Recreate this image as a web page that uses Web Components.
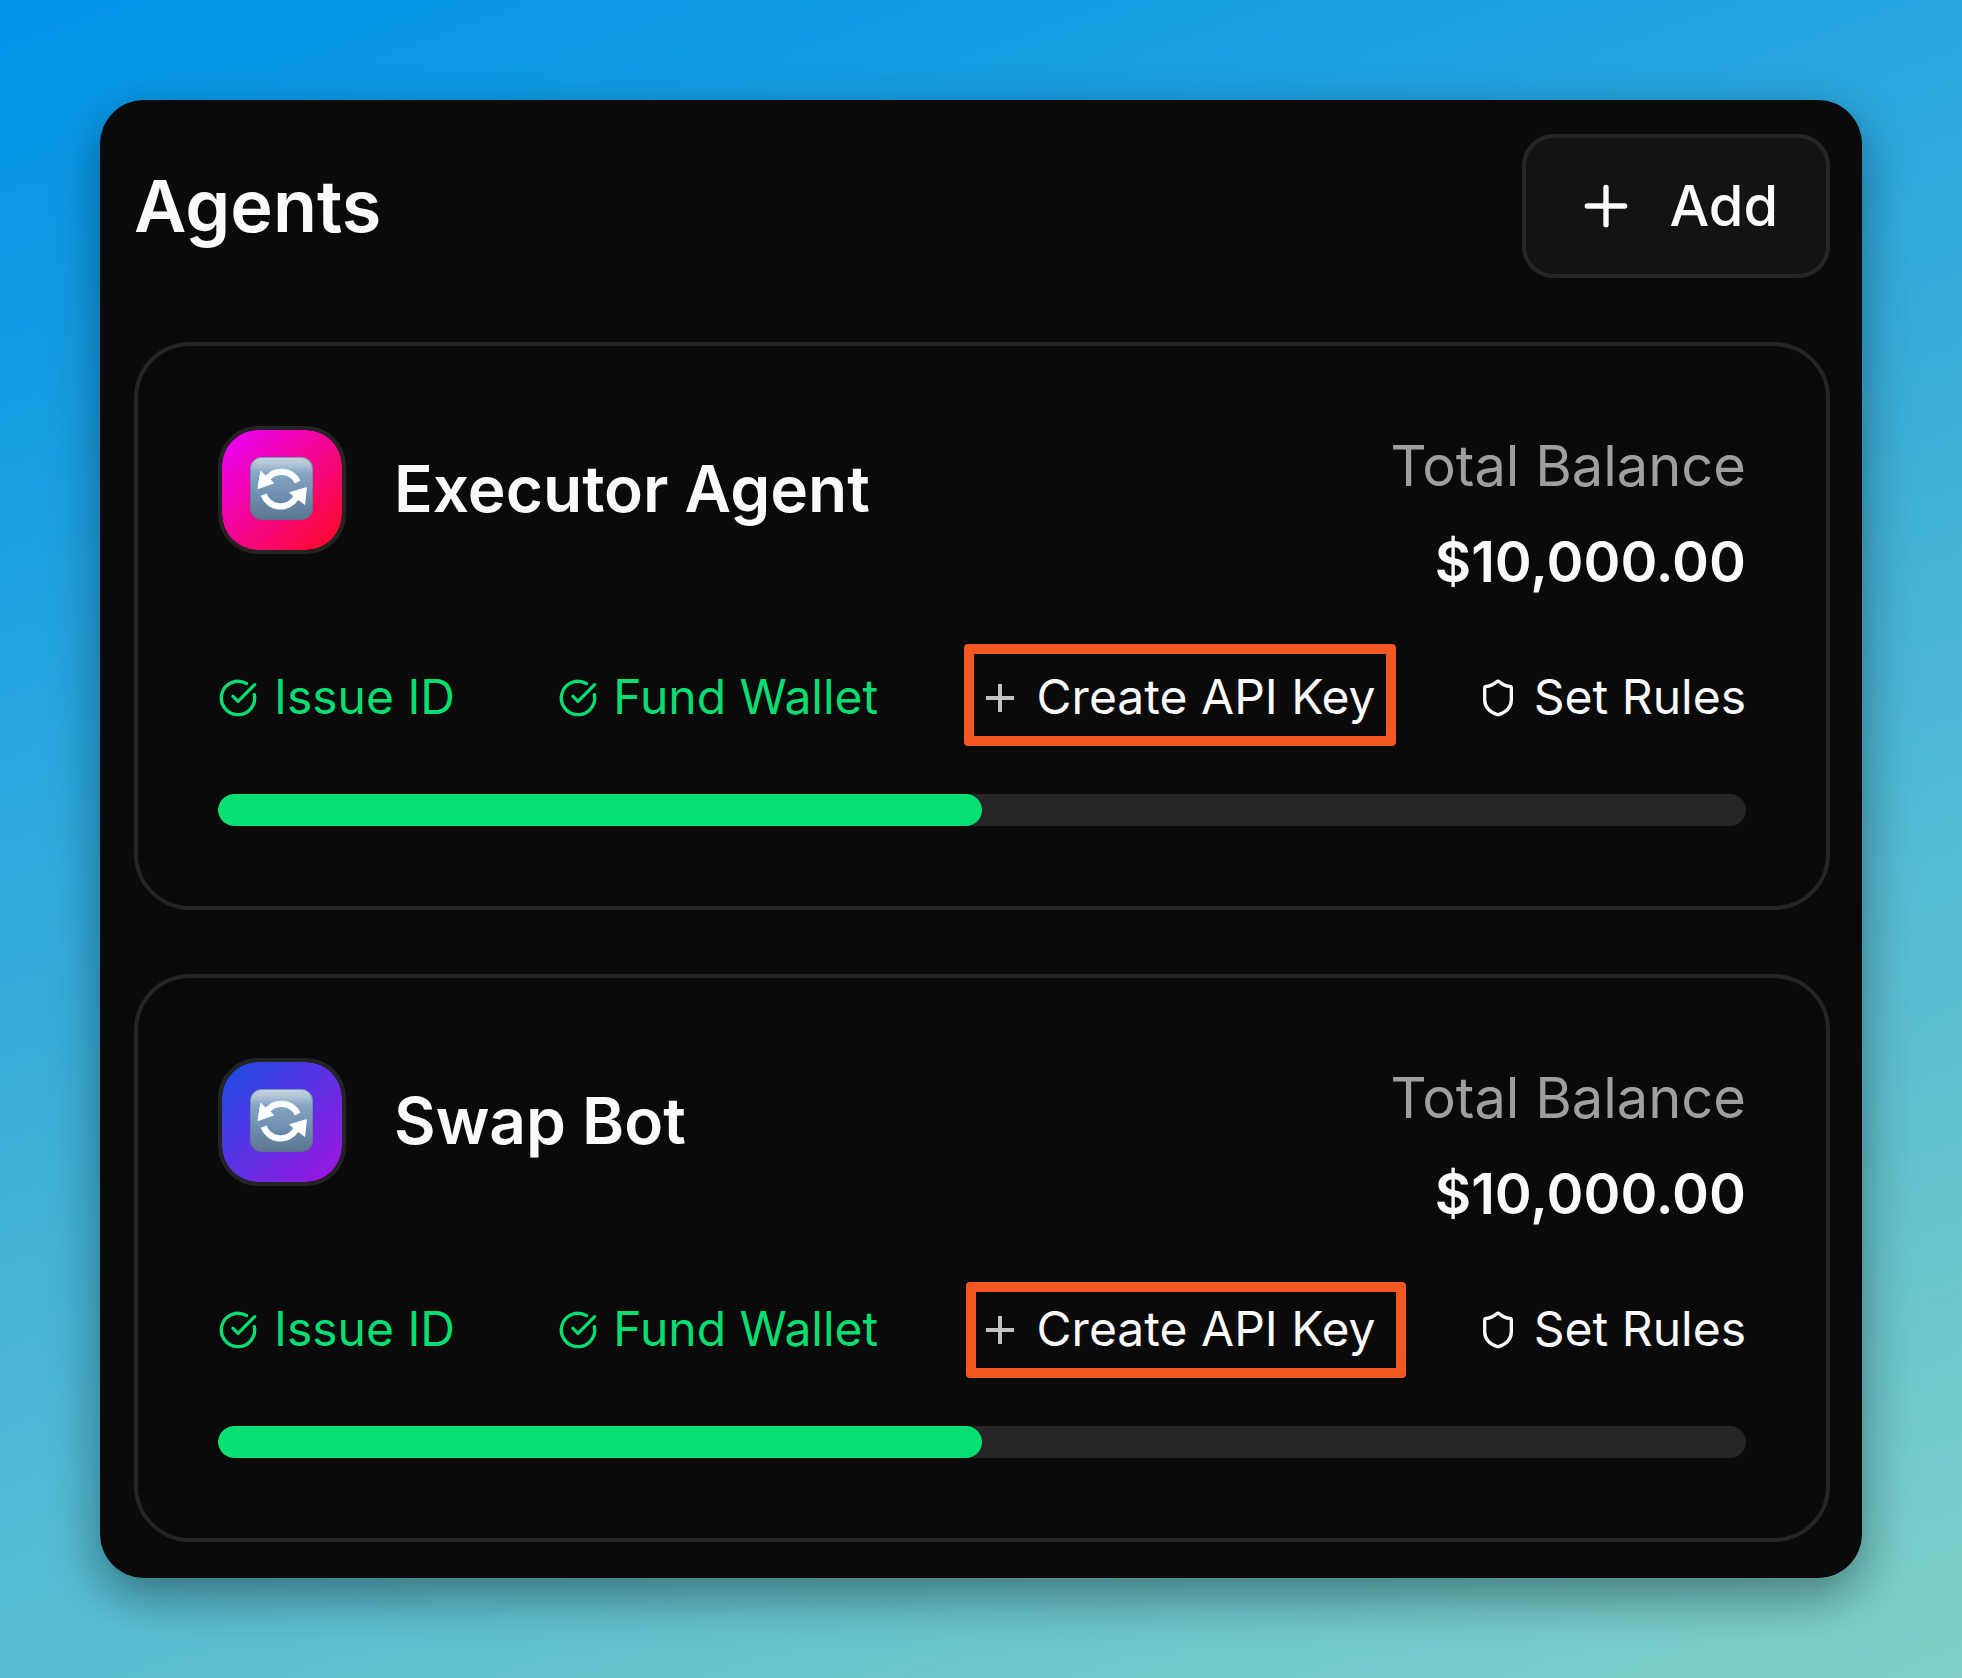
<!DOCTYPE html>
<html lang="en">
<head>
<meta charset="utf-8">
<title>Agents</title>
<style>
  html { height: 100%; }
  body {
    margin: 0; box-sizing: border-box; width: 1962px; height: 1678px; padding: 100px;
    display: flex; overflow: hidden;
    font-family: Inter, "Liberation Sans", sans-serif; color: #fafafa;
    background: linear-gradient(160deg, #0093e9 0%, #80d0c7 100%);
  }
</style>
</head>
<body>
<agents-panel heading="Agents">
  <add-button slot="action">Add</add-button>
  <agent-card name="Executor Agent" balance="$10,000.00" style="--from:#e800ff;--to:#ff0a1e;--mark-x:-17px;--mark-y:-22px;--mark-w:432px;--mark-h:102px"></agent-card>
  <agent-card name="Swap Bot" balance="$10,000.00" style="--from:#184fe6;--to:#a213e0;--mark-x:-15px;--mark-y:-16px;--mark-w:440px;--mark-h:96px"></agent-card>
</agents-panel>

<script>
const define = (tag, html, setup) => customElements.define(tag, class extends HTMLElement {
  constructor() {
    super();
    this.attachShadow({ mode: "open" }).innerHTML = html;
  }
  connectedCallback() { if (setup) setup(this, this.shadowRoot); }
});

const ICONS = {
  check: '<path d="M21.801 10A10 10 0 1 1 17 3.335"/><path d="m9 11 3 3L22 4"/>',
  plus: '<path d="M5 12h14M12 5v14"/>',
  thinplus: '<path d="M3.6 12h16.8M12 3.6v16.8" stroke="#c2c2c2" stroke-width="2.4" stroke-linecap="butt"/>',
  shield: '<path d="M20 13c0 5-3.5 7.5-7.66 8.95a1 1 0 0 1-.67-.01C7.5 20.5 4 18 4 13V6a1 1 0 0 1 1-1c2 0 4.5-1.2 6.24-2.72a1.17 1.17 0 0 1 1.52 0C14.51 3.81 17 5 19 5a1 1 0 0 1 1 1z"/>'
};

define("ui-icon", `
  <style>
    :host { display: block; flex: none; width: var(--size, 40px); height: var(--size, 40px);
      transform: translateX(var(--nudge, 0px)); }
    svg { display: block; width: 100%; height: 100%; }
  </style>
  <svg viewBox="0 0 24 24" fill="none" stroke="currentColor" stroke-width="2" stroke-linecap="round" stroke-linejoin="round"></svg>`,
  (el, root) => { root.querySelector("svg").innerHTML = ICONS[el.getAttribute("name")]; });

define("add-button", `
  <style>
    :host { display: flex; align-items: center; gap: 32px; box-sizing: border-box; height: 144px;
      padding: 0 48px; border: 4px solid #262626; border-radius: 32px; background: #131313;
      font-size: 56px; font-weight: 500; line-height: 80px; }
    ui-icon { --size: 64px; }
  </style>
  <ui-icon name="plus"></ui-icon><span><slot></slot></span>`);

define("agent-avatar", `
  <style>
    :host { display: flex; align-items: center; justify-content: center; flex: none; box-sizing: border-box;
      width: 128px; height: 128px; border: 4px solid #242424; border-radius: 40px;
      background: linear-gradient(135deg, var(--from), var(--to)) padding-box; }
    svg { display: block; width: 63px; height: 63px; margin: -3px 1px 0 0; }
  </style>
  <svg viewBox="0 0 189 189">
    <defs>
      <linearGradient id="face" x1="0" y1="0" x2="0" y2="1">
        <stop offset="0" stop-color="#c3d3e1"/><stop offset=".1" stop-color="#b3c7d8"/>
        <stop offset=".25" stop-color="#85a5c2"/><stop offset=".6" stop-color="#6f90b0"/>
        <stop offset="1" stop-color="#5c7690"/>
      </linearGradient>
      <linearGradient id="rim" x1="0" y1="0" x2="0" y2="1">
        <stop offset="0" stop-color="#7896b0"/><stop offset="1" stop-color="#587288"/>
      </linearGradient>
    </defs>
    <rect x="1.5" y="1.5" width="186" height="186" rx="33" fill="url(#face)" stroke="url(#rim)" stroke-width="3"/>
    <g fill="none" stroke="#fff" stroke-width="19">
      <path d="M143 75A54 54 0 0 0 50 68"/>
      <path d="M41 113A54 54 0 0 0 138 122"/>
    </g>
    <path fill="#fff" stroke="#fff" stroke-width="3" stroke-linejoin="round" d="M32 43 71 78 24 95ZM169 92 164 142 119 107Z"/>
  </svg>`);

define("step-link", `
  <style>
    :host { display: flex; align-items: center; gap: 16px; height: 64px; position: relative;
      font-size: 48px; line-height: 64px; white-space: nowrap; }
    span { padding-bottom: 2px; }
    :host([done]) { color: #07de72; }
    :host([marked]) { --nudge: -1px; }
    /* Callout frame drawn over the highlighted step */
    :host([marked])::after { content: ""; position: absolute; left: var(--mark-x); top: var(--mark-y);
      box-sizing: border-box; width: var(--mark-w); height: var(--mark-h);
      border: 10px solid #f35822; border-radius: 4px; }
  </style>
  <ui-icon></ui-icon><span><slot></slot></span>`,
  (el, root) => {
    const old = root.querySelector("ui-icon"), icon = document.createElement("ui-icon");
    icon.setAttribute("name", el.getAttribute("icon"));
    old.replaceWith(icon);
  });

define("progress-bar", `
  <style>
    :host { display: block; height: 32px; border-radius: 16px; background: #262626; overflow: hidden; }
    div { width: 50%; height: 100%; border-radius: 16px; background: #07e174; }
  </style>
  <div></div>`);

define("agent-card", `
  <style>
    :host { display: flex; flex-direction: column; gap: 64px; box-sizing: border-box; height: 568px;
      padding: 80px; border: 4px solid #262626; border-radius: 56px; }
    .top, .who, .steps { display: flex; }
    .top { justify-content: space-between; align-items: flex-start; }
    .who { align-items: center; gap: 48px; }
    .name { font-size: 64px; font-weight: 600; line-height: 96px; padding-bottom: 2px; }
    .money { display: flex; flex-direction: column; gap: 16px; text-align: right; font-size: 56px; line-height: 80px; }
    .label { color: #9f9f9f; }
    .value { font-weight: 600; }
    .steps { justify-content: space-between; }
    .second { --nudge: 1px; }
  </style>
  <div class="top">
    <div class="who"><agent-avatar></agent-avatar><span class="name"></span></div>
    <div class="money"><span class="label">Total Balance</span><span class="value"></span></div>
  </div>
  <div class="steps">
    <step-link icon="check" done>Issue ID</step-link>
    <step-link class="second" icon="check" done>Fund Wallet</step-link>
    <step-link icon="thinplus" marked>Create API Key</step-link>
    <step-link icon="shield">Set Rules</step-link>
  </div>
  <progress-bar></progress-bar>`,
  (el, root) => {
    root.querySelector(".name").textContent = el.getAttribute("name");
    root.querySelector(".value").textContent = el.getAttribute("balance");
  });

define("agents-panel", `
  <style>
    :host { display: flex; flex-direction: column; gap: 64px; box-sizing: border-box; width: 1762px; height: 1478px;
      padding: 34px 32px 36px 34px; border-radius: 44px; background: #0a0a0a;
      box-shadow: 0 18px 50px rgba(0,0,0,.4); }
    header { display: flex; align-items: center; justify-content: space-between; height: 144px; }
    h1 { margin: 0; font-size: 72px; font-weight: 600; line-height: 112px; }
  </style>
  <header><h1></h1><slot name="action"></slot></header>
  <slot></slot>`,
  (el, root) => { root.querySelector("h1").textContent = el.getAttribute("heading"); });
</script>
</body>
</html>
